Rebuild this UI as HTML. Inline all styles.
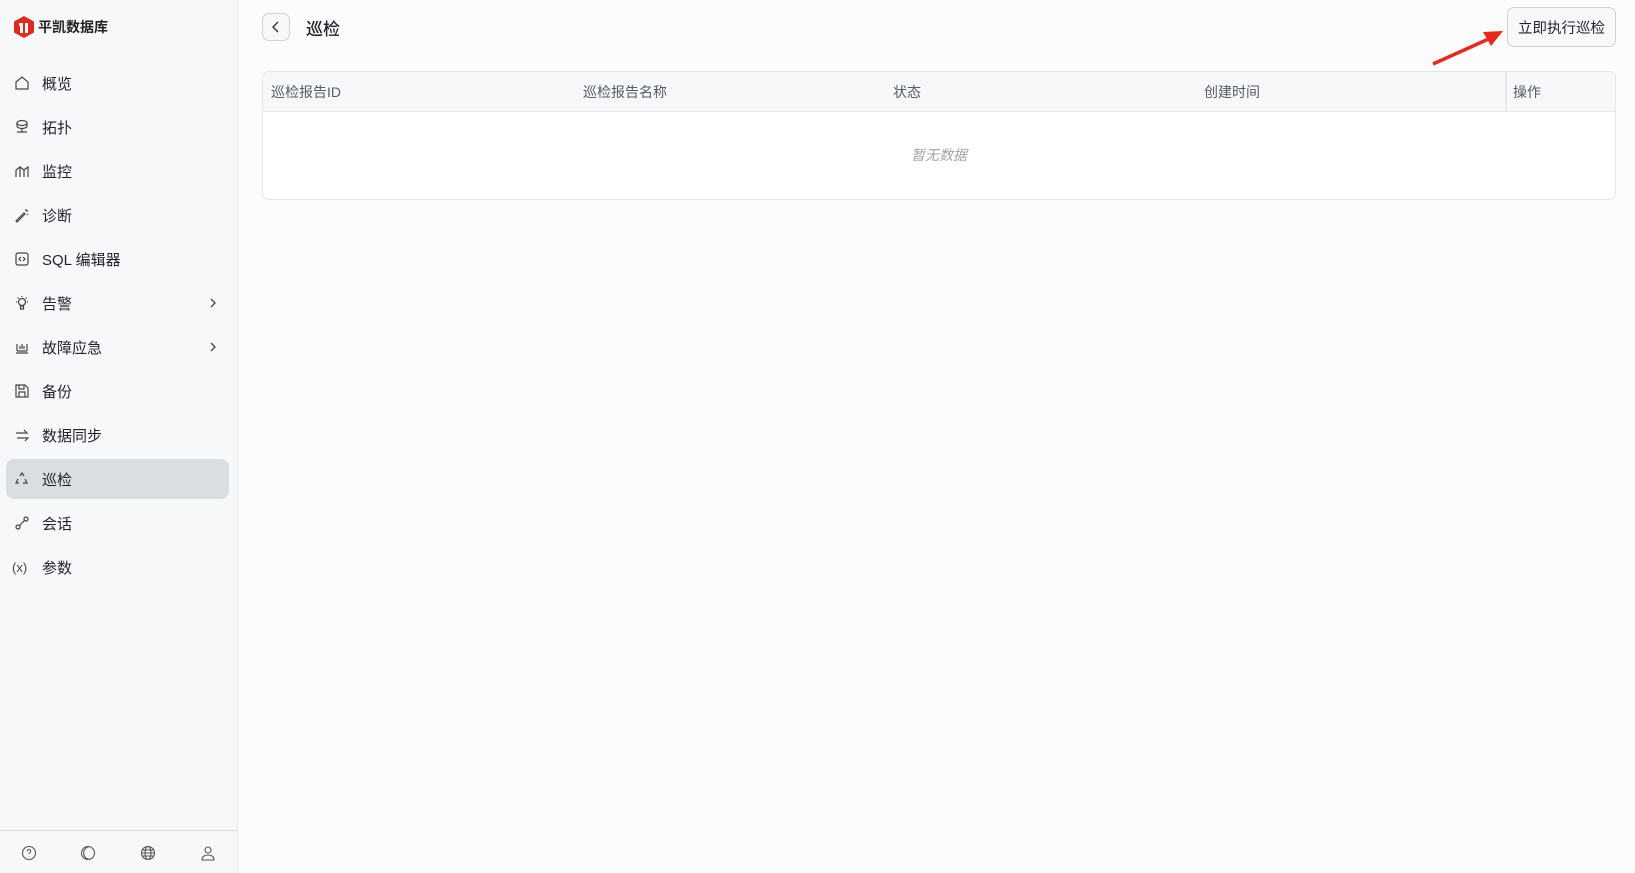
<!DOCTYPE html>
<html><head><meta charset="utf-8"><style>
*{box-sizing:border-box;margin:0;padding:0}
body{width:1635px;height:873px;background:#fcfcfd;font-family:"Liberation Sans","Noto Sans CJK SC",sans-serif;color:#1f2329;position:relative;overflow:hidden}
.side{position:absolute;left:0;top:0;width:238px;height:873px;background:#f7f8f9;border-right:1px solid #e6e8ea}
.logo{position:absolute;left:13px;top:15px;display:flex;align-items:center;font-size:14px;font-weight:bold;color:#222}
.item{position:absolute;left:6px;width:223px;height:40px;border-radius:8px;display:flex;align-items:center;font-size:15px;color:#1f2329}
.item svg{position:absolute;left:8px;top:12px}
.item span{position:absolute;left:36px}
.item.act{background:#d9dfe0}
.chev{position:absolute;left:204px;top:12px}
.bot{position:absolute;left:0;top:830px;width:237px;border-top:1px solid #dde1e3;height:43px}
.bot svg{position:absolute;top:14px}
.back{position:absolute;left:262px;top:13px;width:28px;height:28px;border:1px solid #ccd2d6;border-radius:7px;background:#f7f8f9}
.title{position:absolute;left:306px;top:15px;font-size:17px;font-weight:500}
.btn{position:absolute;left:1507px;top:7px;width:109px;height:40px;border:1px solid #ccd2d6;border-radius:7px;background:#f7f8f9;font-size:14.5px;display:flex;align-items:center;justify-content:center;color:#1f2329}
.table{position:absolute;left:262px;top:71px;width:1354px;height:129px;border:1px solid #e3e6e8;border-radius:7px;background:#fff;overflow:hidden}
.th{position:absolute;left:0;top:0;width:100%;height:40px;background:#f7f8f9;border-bottom:1px solid #e6e8ea;font-size:14px;color:#555c63}
.th span{position:absolute;top:10px}
.empty{position:absolute;left:0;width:100%;top:73px;text-align:center;font-size:14px;font-style:italic;color:#a0a5aa}
</style></head><body>
<div class="side">
 <div class="logo"><svg width="22" height="24" viewBox="0 0 22 24"><path d="M11 1 L21 6.5 V17.5 L11 23 L1 17.5 V6.5Z" fill="#e02a1f"/><path d="M6 8h4v10h-3V11H6z M12 8h3v10h-3z" fill="#fff"/></svg><span style="margin-left:3px">平凯数据库</span></div>
 <div class="item" style="top:63px"><svg width="16" height="16" fill="none" stroke="#444" stroke-width="1.2"><path d="M2 7 L8 2 L14 7 V14 H2Z"/></svg><span>概览</span></div>
 <div class="item" style="top:107px"><svg width="16" height="16" fill="none" stroke="#444" stroke-width="1.2"><ellipse cx="8" cy="4" rx="5" ry="2.5"/><path d="M3 4v3c0 1.4 2.2 2.5 5 2.5s5-1.1 5-2.5V4 M8 9.5V13 M3 13h10"/></svg><span>拓扑</span></div>
 <div class="item" style="top:151px"><svg width="16" height="16" fill="none" stroke="#444" stroke-width="1.2"><path d="M2 14V7 M6 14V4 L2 7 M6 4 L10 7 V14 M10 7 L14 4 V14"/></svg><span>监控</span></div>
 <div class="item" style="top:195px"><svg width="16" height="16" fill="none" stroke="#444" stroke-width="1.2"><path d="M2 14 L10 6 L11 7 L3 15Z M12 2v2 M14 4h-2 M13 7l1 1"/></svg><span>诊断</span></div>
 <div class="item" style="top:239px"><svg width="16" height="16" fill="none" stroke="#444" stroke-width="1.2"><rect x="2" y="2" width="12" height="12" rx="2"/><path d="M7 6L5 8l2 2 M9 6l2 2-2 2"/></svg><span>SQL 编辑器</span></div>
 <div class="item" style="top:283px"><svg width="16" height="16" fill="none" stroke="#444" stroke-width="1.2"><circle cx="8" cy="7" r="3.5"/><path d="M6.5 11h3v3h-3z M8 1v1 M2 7h1 M13 7h1 M3.5 2.5l1 1 M12.5 2.5l-1 1"/></svg><span>告警</span><svg class="chev" width="10" height="16" fill="none" stroke="#444" stroke-width="1.3" style="left:202px"><path d="M3 4l4 4-4 4"/></svg></div>
 <div class="item" style="top:327px"><svg width="16" height="16" fill="none" stroke="#444" stroke-width="1.2"><path d="M2 14h12 M3 12V5 M13 12V5 M3 12h10 M6 10V7 M8 10V5 M10 10V7"/></svg><span>故障应急</span><svg class="chev" width="10" height="16" fill="none" stroke="#444" stroke-width="1.3" style="left:202px"><path d="M3 4l4 4-4 4"/></svg></div>
 <div class="item" style="top:371px"><svg width="16" height="16" fill="none" stroke="#444" stroke-width="1.2"><path d="M2 2h9l3 3v9H2Z M5 2v4h5V2 M5 14V9h6v5"/></svg><span>备份</span></div>
 <div class="item" style="top:415px"><svg width="16" height="16" fill="none" stroke="#444" stroke-width="1.2"><path d="M2 6h11l-3-3 M3 11h11l-3 3"/></svg><span>数据同步</span></div>
 <div class="item act" style="top:459px"><svg width="16" height="16" fill="none" stroke="#444" stroke-width="1.2"><path d="M6 5l2-3 2 3 M11 8l2 4h-4 M5 12H2l2-4"/></svg><span>巡检</span></div>
 <div class="item" style="top:503px"><svg width="16" height="16" fill="none" stroke="#444" stroke-width="1.2"><circle cx="4" cy="12" r="2"/><circle cx="12" cy="4" r="2"/><path d="M5.5 10.5l5-5"/></svg><span>会话</span></div>
 <div class="item" style="top:547px"><span style="left:6px;font-size:13px;color:#444">(x)</span><span>参数</span></div>
 <div class="bot">
  <svg style="left:21px" width="16" height="16" fill="none" stroke="#555" stroke-width="1.1"><circle cx="8" cy="8" r="6.5"/><path d="M6.3 6.3a1.7 1.7 0 113 1c-.8.5-1.3.9-1.3 1.7 M8 11v.5"/></svg>
  <svg style="left:80px" width="16" height="16" fill="none" stroke="#555" stroke-width="1.1"><circle cx="8" cy="8" r="6.5"/><path d="M9 1.6a6.5 6.5 0 000 12.8"/></svg>
  <svg style="left:140px" width="16" height="16" fill="none" stroke="#555" stroke-width="1.1"><circle cx="8" cy="8" r="6.5"/><ellipse cx="8" cy="8" rx="3" ry="6.5"/><path d="M1.5 8h13 M2.5 5h11 M2.5 11h11"/></svg>
  <svg style="left:200px" width="16" height="16" fill="none" stroke="#555" stroke-width="1.1"><circle cx="8" cy="5" r="3"/><path d="M2 15c0-3.5 2.5-5 6-5s6 1.5 6 5Z"/></svg>
 </div>
</div>
<div class="back"><svg width="26" height="26" fill="none" stroke="#333" stroke-width="1.4"><path d="M15 8l-5 5 5 5"/></svg></div>
<div class="title">巡检</div>
<svg style="position:absolute;left:1425px;top:26px" width="85" height="42"><path d="M8 38 L68 11" stroke="#e8291c" stroke-width="3.5"/><path d="M78 5 L58 6 L66 20Z" fill="#e8291c"/></svg>
<div class="btn">立即执行巡检</div>
<div class="table">
 <div class="th"><span style="left:8px">巡检报告ID</span><span style="left:320px">巡检报告名称</span><span style="left:630px">状态</span><span style="left:941px">创建时间</span><div style="position:absolute;left:1242px;top:0;height:40px;border-left:2px solid #e6e8ea"></div><span style="left:1250px">操作</span></div>
 <div class="empty">暂无数据</div>
</div>
</body></html>
